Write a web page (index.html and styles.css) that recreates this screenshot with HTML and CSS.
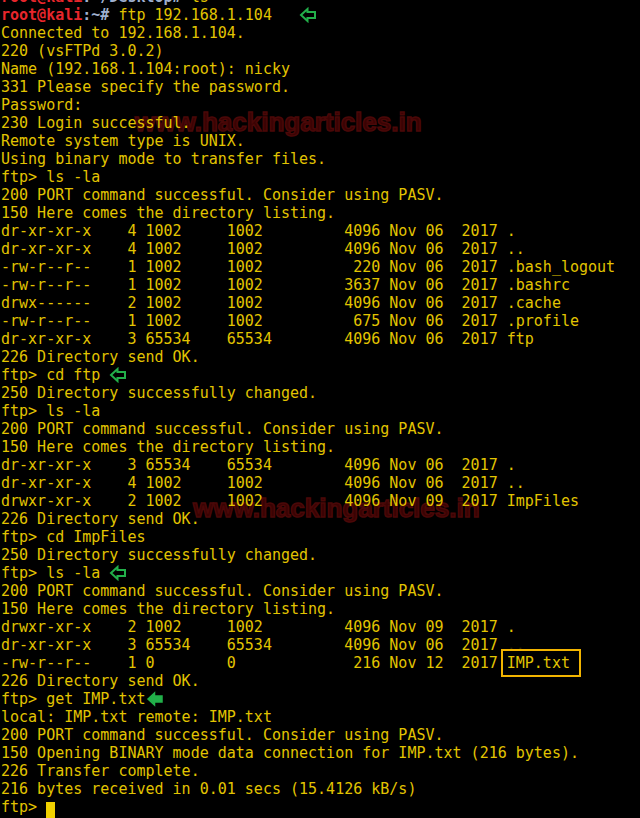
FILE: index.html
```html
<!DOCTYPE html>
<html>
<head>
<meta charset="utf-8">
<link rel="stylesheet" href="styles.css">
</head>
<body>
<div class="term">
<div class="wm wm1">www.hackingarticles.in</div>
<div class="wm wm2">www.hackingarticles.in</div>
<pre class="out"><span class="usr">root@kali</span><span class="path">:~/Desktop#</span> ls
<span class="usr">root@kali</span><span class="path">:~#</span> ftp 192.168.1.104   <svg class="arr" width="18" height="16" viewBox="0 0 18 16"><path d="M2 8 L8.5 2 L8.5 5 L16 5 L16 11 L8.5 11 L8.5 14 Z" fill="none" stroke="#22b04a" stroke-width="2" stroke-linejoin="miter"/></svg>
Connected to 192.168.1.104.
220 (vsFTPd 3.0.2)
Name (192.168.1.104:root): nicky
331 Please specify the password.
Password:
230 Login successful.
Remote system type is UNIX.
Using binary mode to transfer files.
ftp&gt; ls -la
200 PORT command successful. Consider using PASV.
150 Here comes the directory listing.
dr-xr-xr-x    4 1002     1002         4096 Nov 06  2017 .
dr-xr-xr-x    4 1002     1002         4096 Nov 06  2017 ..
-rw-r--r--    1 1002     1002          220 Nov 06  2017 .bash_logout
-rw-r--r--    1 1002     1002         3637 Nov 06  2017 .bashrc
drwx------    2 1002     1002         4096 Nov 06  2017 .cache
-rw-r--r--    1 1002     1002          675 Nov 06  2017 .profile
dr-xr-xr-x    3 65534    65534        4096 Nov 06  2017 ftp
226 Directory send OK.
ftp&gt; cd ftp <svg class="arr" width="18" height="16" viewBox="0 0 18 16"><path d="M2 8 L8.5 2 L8.5 5 L16 5 L16 11 L8.5 11 L8.5 14 Z" fill="none" stroke="#22b04a" stroke-width="2"/></svg>
250 Directory successfully changed.
ftp&gt; ls -la
200 PORT command successful. Consider using PASV.
150 Here comes the directory listing.
dr-xr-xr-x    3 65534    65534        4096 Nov 06  2017 .
dr-xr-xr-x    4 1002     1002         4096 Nov 06  2017 ..
drwxr-xr-x    2 1002     1002         4096 Nov 09  2017 ImpFiles
226 Directory send OK.
ftp&gt; cd ImpFiles
250 Directory successfully changed.
ftp&gt; ls -la <svg class="arr" width="18" height="16" viewBox="0 0 18 16"><path d="M2 8 L8.5 2 L8.5 5 L16 5 L16 11 L8.5 11 L8.5 14 Z" fill="none" stroke="#22b04a" stroke-width="2"/></svg>
200 PORT command successful. Consider using PASV.
150 Here comes the directory listing.
drwxr-xr-x    2 1002     1002         4096 Nov 09  2017 .
dr-xr-xr-x    3 65534    65534        4096 Nov 06  2017 <span class="dim">..</span>
-rw-r--r--    1 0        0             216 Nov 12  2017 <span class="box">IMP.txt</span>
226 Directory send OK.
ftp&gt; get IMP.txt<svg class="arr" width="18" height="16" viewBox="0 0 18 16"><path d="M2 8 L8.5 2 L8.5 5 L16 5 L16 11 L8.5 11 L8.5 14 Z" fill="#22b04a" stroke="#22b04a" stroke-width="1.5"/></svg>
local: IMP.txt remote: IMP.txt
200 PORT command successful. Consider using PASV.
150 Opening BINARY mode data connection for IMP.txt (216 bytes).
226 Transfer complete.
216 bytes received in 0.01 secs (15.4126 kB/s)
ftp&gt; <span class="cursor"> </span></pre>
</div>
</body>
</html>
```
FILE: styles.css
```css
html, body {
  margin: 0;
  padding: 0;
  background: #000;
}
.term {
  position: relative;
  width: 640px;
  height: 818px;
  overflow: hidden;
  background: #000;
}
.out {
  position: relative;
  z-index: 1;
  margin: -12px 0 0 0;
  padding: 0 0 0 1px;
  font-family: "DejaVu Sans Mono", monospace;
  font-size: 15px;
  line-height: 18px;
  color: #e2c400;
  white-space: pre;
}
.usr {
  color: #e8262c;
  font-weight: bold;
}
.path {
  color: #9fb0cf;
  font-weight: bold;
}
.arr {
  vertical-align: -3px;
}
.dim {
  color: #2a2500;
}
.box {
  outline: 2px solid #f2b400;
  outline-offset: 0;
  padding: 3px 9px 3px 4px;
  margin-left: -4px;
  margin-right: -9px;
}
.cursor {
  display: inline-block;
  width: 9px;
  height: 17px;
  background: #f0d000;
  vertical-align: -4px;
}
.wm {
  position: absolute;
  z-index: 0;
  font-family: "Liberation Sans", Arial, sans-serif;
  font-weight: bold;
  font-size: 26px;
  line-height: 30px;
  color: #3a0303;
  -webkit-text-stroke: 1.5px #4a0808;
  letter-spacing: 0;
  white-space: nowrap;
}
.wm1 {
  left: 135px;
  top: 107px;
}
.wm2 {
  left: 193px;
  top: 493px;
}
```
